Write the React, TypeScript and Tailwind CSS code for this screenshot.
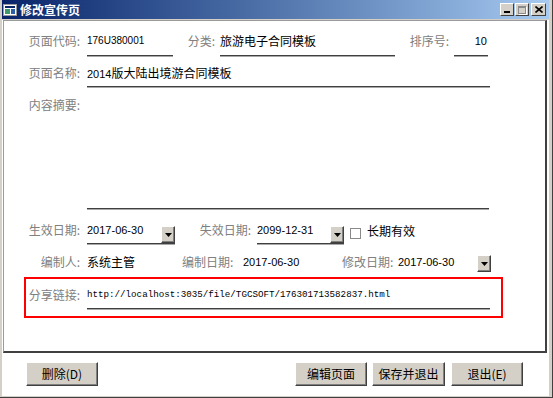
import React from 'react';

const CJK = "font-['Noto_Sans_CJK_SC',sans-serif]";
const NUM = "font-['Liberation_Sans','Noto_Sans_CJK_SC',sans-serif]";

function Label({ text, className }: { text: string; className: string }) {
  return (
    <div className={`${CJK} text-[12px] leading-[16px] text-[#808080] whitespace-nowrap ${className}`}>
      {text}
    </div>
  );
}

function DropBtn() {
  return (
    <div className="w-[14px] h-[17px] bg-[#d4d0c8] border border-t-white border-l-white border-r-[#404040] border-b-[#404040] shadow-[inset_-1px_-1px_0_#808080] flex items-center justify-center shrink-0">
      <svg width="7" height="6" viewBox="0 0 7 6">
        <path d="M0 1h7L3.5 5z" fill="#000" />
      </svg>
    </div>
  );
}

function Button({ text, className }: { text: string; className: string }) {
  return (
    <div
      className={`h-[24px] bg-[#d4d0c8] border border-t-white border-l-white border-r-[#404040] border-b-[#404040] shadow-[inset_-1px_-1px_0_#808080] flex items-center justify-center ${CJK} text-[12px] text-black ${className}`}
    >
      {text}
    </div>
  );
}

const field = 'border-b border-b-[#404040] shadow-[0_1px_0_#a8a8a8]';

export default function App() {
  return (
    <div className="w-[553px] h-[398px] bg-[#d4d0c8] flex flex-col pl-[2px] pr-[3px] pb-[1px] border-r border-b border-r-[#404040] border-b-[#404040]">
      {/* title bar */}
      <div className="h-[19px] shrink-0 flex items-center bg-linear-to-r from-[#0a246a] to-[#a6caf0] pl-[1px]">
        <svg width="14" height="12" viewBox="0 0 14 12" className="shrink-0">
          <rect x="0.5" y="0.5" width="13" height="11" fill="#ffffff" stroke="#9a9a9a" />
          <rect x="2" y="2" width="10" height="2" fill="#0a246a" />
          <rect x="2" y="5" width="5" height="5" fill="#3c9a6a" />
          <rect x="8" y="5" width="4" height="5" fill="#2d5fa8" />
        </svg>
        <span className={`${CJK} text-[12px] font-bold text-white ml-[3px] leading-none`}>修改宣传页</span>
        <div className="ml-auto flex items-center gap-[1px] mr-[3px]">
          <div className="w-[14px] h-[13px] bg-[#d4d0c8] border border-t-white border-l-white border-r-[#404040] border-b-[#404040] flex items-end justify-center pb-[2px]">
            <div className="w-[6px] h-[2px] bg-black" />
          </div>
          <div className="w-[14px] h-[13px] bg-[#d4d0c8] border border-t-white border-l-white border-r-[#404040] border-b-[#404040] flex items-center justify-center">
            <div className="w-[8px] h-[8px] border border-[#8a8a8a] border-t-2 shadow-[1px_1px_0_#ffffff]" />
          </div>
          <div className="w-[15px] h-[13px] ml-[1px] bg-[#d4d0c8] border border-t-white border-l-white border-r-[#404040] border-b-[#404040] flex items-center justify-center">
            <svg width="8" height="7" viewBox="0 0 8 7">
              <path d="M0.5 0.5L7.5 6.5M7.5 0.5L0.5 6.5" stroke="#000" strokeWidth="1.6" />
            </svg>
          </div>
        </div>
      </div>

      {/* client */}
      <div className="flex-1 bg-white flex flex-col mt-[1px]">
        <div className="h-[333px] ml-[1px] mr-[2px] border-t border-l border-t-[#9a9a9a] border-l-[#9a9a9a] border-r-2 border-b-2 border-r-[#404040] border-b-[#404040] pt-[12px] flex flex-col">
          {/* row 1 */}
          <div className="flex items-start">
            <Label text="页面代码:" className="w-[79px] text-right pr-[3px]" />
            <div className={`ml-[4px] w-[86px] h-[23px] ${field} ${NUM} text-[10px] leading-[16px] text-black`}>176U380001</div>
            <Label text="分类:" className="w-[44px] text-right pr-[2px]" />
            <div className={`ml-[3px] w-[175px] h-[23px] ${field} ${CJK} text-[12px] leading-[16px] text-black`}>旅游电子合同模板</div>
            <Label text="排序号:" className="w-[56px] text-right pr-[2px]" />
            <div className={`ml-[3px] w-[34px] h-[23px] ${field} ${NUM} text-[11px] leading-[16px] text-black text-right pr-[1px]`}>10</div>
          </div>

          {/* row 2 */}
          <div className="flex items-start mt-[9px]">
            <Label text="页面名称:" className="w-[79px] text-right pr-[3px]" />
            <div className={`ml-[4px] w-[403px] h-[22px] ${field} ${CJK} text-[12px] leading-[16px] text-black`}>
              <span className={`${NUM} text-[11px]`}>2014</span>版大陆出境游合同模板
            </div>
          </div>

          {/* row 3 */}
          <div className="flex items-start mt-[10px]">
            <Label text="内容摘要:" className="w-[79px] text-right pr-[3px]" />
            <div className={`ml-[4px] w-[402px] h-[112px] ${field}`} />
          </div>

          {/* row 4 */}
          <div className="flex items-start mt-[13px]">
            <Label text="生效日期:" className="w-[79px] text-right pr-[3px]" />
            <div className={`ml-[4px] w-[88px] h-[22px] ${field} flex justify-between`}>
              <span className={`${NUM} text-[11px] leading-[16px] text-black self-start`}>2017-06-30</span>
              <div className="self-end">
                <DropBtn />
              </div>
            </div>
            <Label text="失效日期:" className="w-[79px] text-right pr-[3px]" />
            <div className={`ml-[3px] w-[87px] h-[22px] ${field} flex justify-between`}>
              <span className={`${NUM} text-[11px] leading-[16px] text-black self-start`}>2099-12-31</span>
              <div className="self-end">
                <DropBtn />
              </div>
            </div>
            <div className="ml-[6px] mt-[6px] w-[11px] h-[11px] border border-[#8a8a8a] bg-white" />
            <span className={`ml-[6px] mt-[1px] ${CJK} text-[12px] leading-[16px] text-black`}>长期有效</span>
          </div>

          {/* row 5 */}
          <div className="flex items-start mt-[10px]">
            <Label text="编制人:" className="w-[79px] text-right pr-[3px]" />
            <div className={`ml-[4px] w-[95px] ${CJK} text-[12px] leading-[16px] text-black`}>系统主管</div>
            <Label text="编制日期:" className="w-[61px]" />
            <div className={`w-[99px] ${NUM} text-[11px] leading-[16px] text-black`}>2017-06-30</div>
            <Label text="修改日期:" className="w-[56px]" />
            <div className={`w-[79px] ${NUM} text-[11px] leading-[16px] text-black`}>2017-06-30</div>
            <div className="mt-[1px]">
              <DropBtn />
            </div>
          </div>

          {/* share link */}
          <div className="ml-[20px] mt-[5px] w-[479px] h-[41px] border-2 border-[#ff0000] pt-[8px] flex items-start">
            <Label text="分享链接:" className="w-[57px] text-right pr-[3px]" />
            <div className={`ml-[4px] w-[403px] h-[22px] ${field} font-['Liberation_Mono',monospace] text-[9.2px] leading-[16px] text-black whitespace-nowrap`}>
              http://localhost:3035/file/TGCSOFT/176301713582837.html
            </div>
          </div>
        </div>

        {/* buttons */}
        <div className="flex items-start mt-[9px]">
          <Button text="删除(D)" className="ml-[24px] w-[72px]" />
          <Button text="编辑页面" className="ml-auto w-[72px]" />
          <Button text="保存并退出" className="ml-[5px] w-[73px]" />
          <Button text="退出(E)" className="ml-[6px] w-[72px] mr-[26px]" />
        </div>
      </div>
    </div>
  );
}
